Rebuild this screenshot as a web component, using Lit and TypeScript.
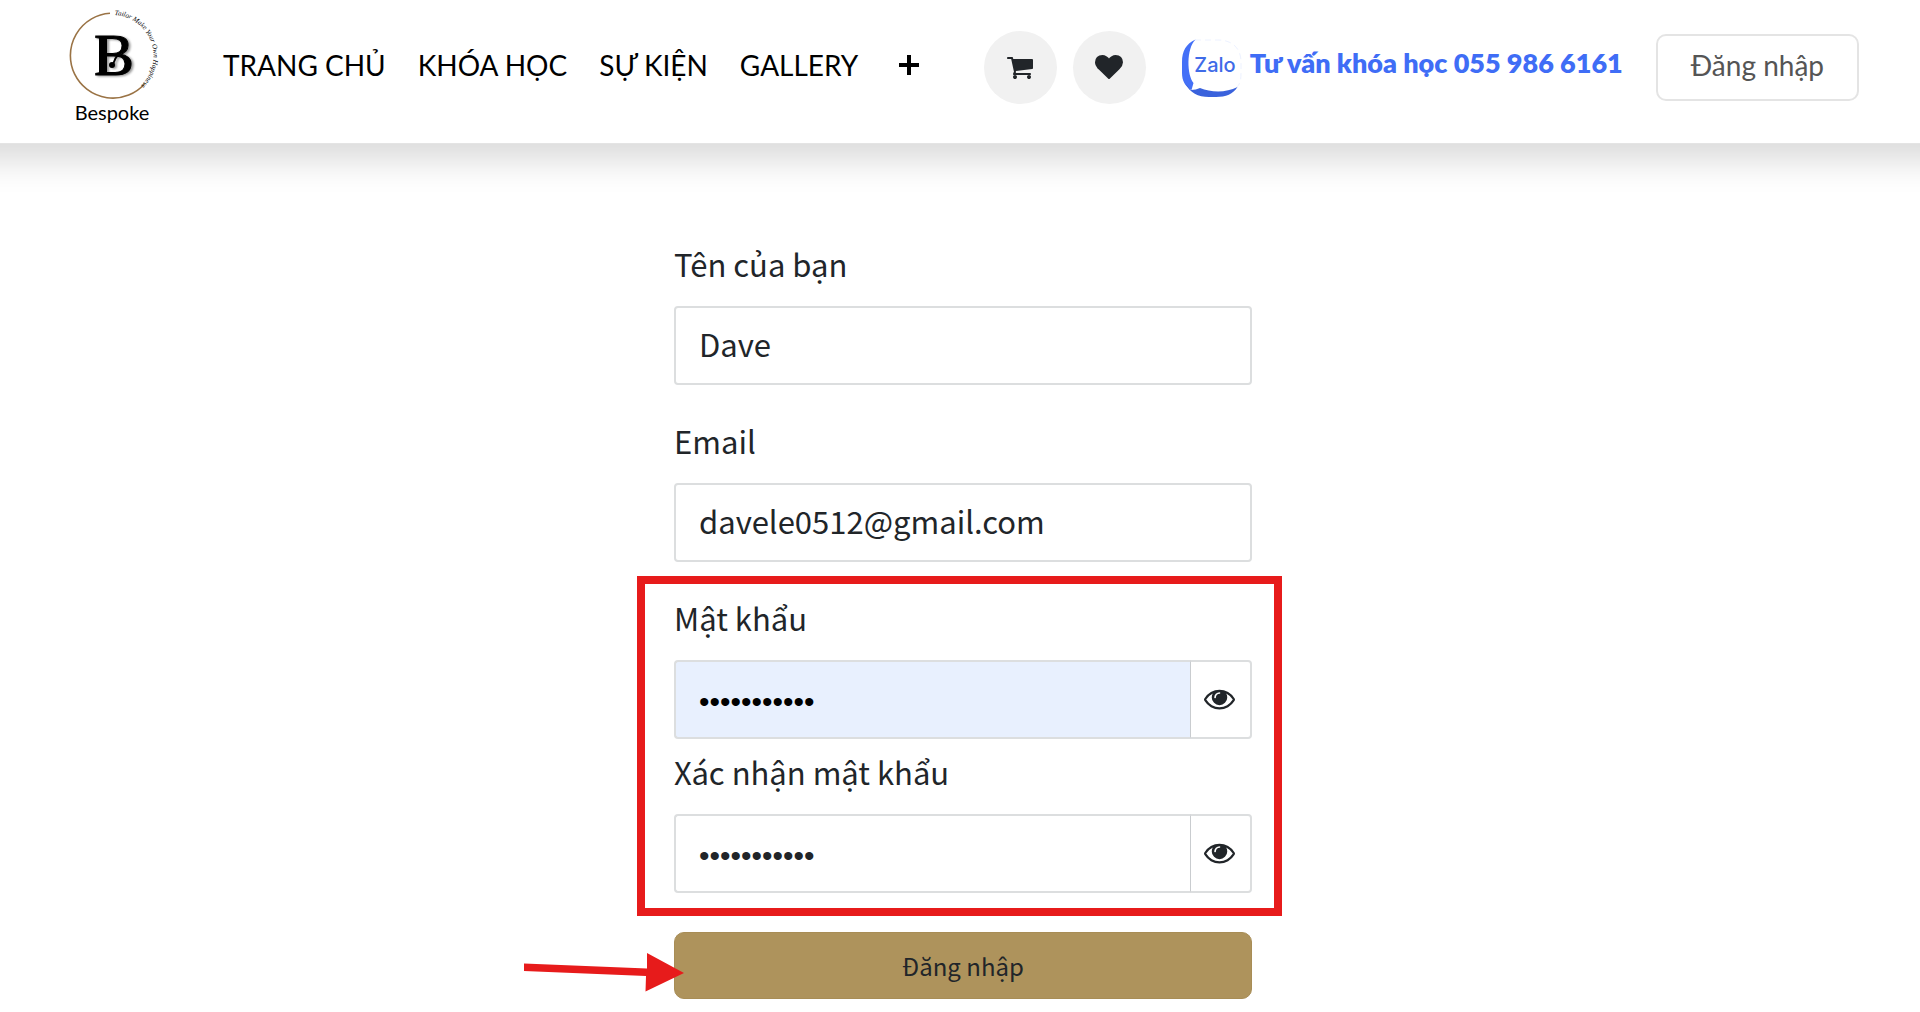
import { LitElement, html, css, svg } from "lit";
import { customElement, state } from "lit/decorators.js";
import { classMap } from "lit/directives/class-map.js";

const CART =
  "M704 1536q0 52-38 90t-90 38-90-38-38-90 38-90 90-38 90 38 38 90zm896 0q0 52-38 90t-90 38-90-38-38-90 38-90 90-38 90 38 38 90zm128-1088v512q0 24-16.500 42.500t-40.500 21.500l-1044 122q13 60 13 70 0 16-24 64h920q26 0 45 19t19 45-19 45-45 19h-1024q-26 0-45-19t-19-45q0-11 8-31.500t16-36 21.500-40 15.500-29.500l-177-823h-204q-26 0-45-19t-19-45 19-45 45-19h256q16 0 28.500 6.500t19.500 15.500 13 24.500 8 26 5.500 29.500 4.500 26h1201q26 0 45 19t19 45z";
const HEART =
  "M896 1664q-26 0-44-18l-624-602q-10-8-27.500-26t-55.500-65.500-68-97.500-53.500-121-23.500-138q0-220 127-344t351-124q62 0 126.500 21.500t120 58 95.500 68.500 76 68q36-36 76-68t95.500-68.500 120-58 126.500-21.500q224 0 351 124t127 344q0 221-229 450l-623 600q-18 18-44 18z";
const EYE =
  "M1664 960q-152-236-381-353 61 104 61 225 0 185-131.500 316.500t-316.500 131.500-316.500-131.500-131.500-316.500q0-121 61-225-229 117-381 353 133 205 333.500 326.500t434.500 121.500 434.500-121.500 333.500-326.500zm-720-384q0-20-14-34t-34-14q-125 0-214.500 89.500t-89.500 214.500q0 20 14 34t34 14 34-14 14-34q0-86 61-147t147-61q20 0 34-14t14-34zm848 384q0 34-20 69-140 230-376.500 368.500t-499.500 138.500-499.500-139-376.500-368q-20-35-20-69t20-69q140-229 376.500-368t499.500-139 499.500 139 376.500 368q20 35 20 69z";

const glyph = (d: string) => html`
  <svg class="glyph" viewBox="0 0 1792 1792" aria-hidden="true">${svg`<path d=${d} />`}</svg>
`;

@customElement("site-header")
export class SiteHeader extends LitElement {
  static styles = css`
    :host {
      display: block;
      overflow-x: clip;
      font-family: "Lato", "Liberation Sans", sans-serif;
    }
    /* The bar runs past both sides so that its shadow stays even at the edges. */
    .bar {
      display: flex;
      align-items: center;
      box-sizing: border-box;
      min-height: 143px;
      margin: 0 -40px;
      padding: 8px 101px 8px 104px;
      background: #fff;
      border-bottom: 1px solid #e4e4e4;
      box-shadow: 0 16px 32px rgba(0, 0, 0, 0.15);
    }
    .brand {
      display: block;
      margin-right: 59px;
    }
    .brand svg {
      display: block;
      width: 100px;
      height: 127px;
    }
    .menu {
      display: flex;
      align-items: center;
      gap: 32px;
      padding-bottom: 14px;
    }
    .menu a {
      color: #000;
      font-size: 28px;
      line-height: 36px;
      text-decoration: none;
      white-space: nowrap;
    }
    .more {
      display: flex;
      margin-left: 8px;
      padding: 0;
      border: 0;
      background: none;
    }
    .more svg {
      width: 22px;
      height: 22px;
    }
    .actions {
      display: flex;
      align-items: center;
      margin-left: auto;
      padding-bottom: 9px;
    }
    .round {
      display: flex;
      align-items: center;
      justify-content: center;
      width: 73px;
      height: 73px;
      margin-right: 16px;
      border-radius: 50%;
      background: #f1f1f1;
      color: #212529;
    }
    .glyph {
      width: 28px;
      height: 28px;
      fill: currentColor;
    }
    .zalo {
      display: flex;
      align-items: center;
      gap: 8px;
      margin: 0 33px 0 20px;
      color: #3f6df6;
      font-size: 27px;
      font-weight: 800;
      line-height: 36px;
      text-decoration: none;
      white-space: nowrap;
    }
    .zalo svg {
      width: 60px;
      height: 60px;
    }
    .zalo span {
      padding-bottom: 8px;
    }
    .login {
      display: block;
      padding: 11px 33px 16px;
      border: 2px solid #e4e4e4;
      border-radius: 10px;
      color: #555;
      font-size: 28px;
      line-height: 36px;
      text-decoration: none;
      white-space: nowrap;
    }
    .word {
      font: 20px "Lato", sans-serif;
    }
    .motto {
      font: italic 7px "Liberation Serif", serif;
    }
    .mono {
      font: 60px "Liberation Serif", serif;
    }
    .zword {
      font: 500 20px "Inter", sans-serif;
    }
  `;

  private links = ["TRANG CHỦ", "KHÓA HỌC", "SỰ KIỆN", "GALLERY"];

  render() {
    return html`
      <header class="bar">
        <a class="brand" href="#" aria-label="Bespoke">
          <svg viewBox="0 0 100 127">
            <defs>
              <path id="ring" d="M48.500 7A41 41 0 0 1 48.500 89" />
              <filter id="soft" x="-20%" y="-20%" width="140%" height="140%">
                <feDropShadow dx="2" dy="1" stdDeviation="1" flood-opacity="0.4" />
              </filter>
            </defs>
            <path d="M46 5.200A42.500 42.500 0 1 0 80.500 76" fill="none" stroke="#9a7345" stroke-width="1.600" />
            <text class="motto"><textPath href="#ring" startOffset="2">Tailor Make Your Own Happiness</textPath></text>
            <g filter="url(#soft)">
              <text class="mono" x="30" y="67" stroke="#000" stroke-width="1">B</text>
              <rect x="35" y="28" width="8" height="38" />
              <path d="M56 47C50 47 51 56 48 57" fill="none" stroke="#000" stroke-width="2" />
              <circle cx="48" cy="57" r="3" />
            </g>
            <text class="word" x="48" y="112" text-anchor="middle">Bespoke</text>
          </svg>
        </a>
        <nav class="menu">
          ${this.links.map((label) => html`<a href="#">${label}</a>`)}
          <button class="more" type="button" aria-label="Thêm">
            <svg viewBox="0 0 22 22"><path d="M11 1V21M1 11H21" stroke="#000" stroke-width="4" /></svg>
          </button>
        </nav>
        <div class="actions">
          <a class="round" href="#" aria-label="Giỏ hàng">${glyph(CART)}</a>
          <a class="round" href="#" aria-label="Yêu thích">${glyph(HEART)}</a>
          <a class="zalo" href="#">
            <svg viewBox="0 0 60 60" aria-hidden="true">
              <path d="M13 3H36C50 3 59 11 59 25V36C59 43 58 47 55 50" fill="none" stroke="#edf2ff" stroke-width="1" stroke-dasharray="6 4" />
              <path d="M13.500 2.500C4 7 0 14 0 25V36C0 44 3 49 9.500 53L11.500 46C5 38 4 12 13.500 2.500Z" fill="#4470f7" />
              <path d="M3 46C8 56 16 60 27 60H34C44 60 51 57 55.500 50C44 56 29 55.500 18 51Q14 53 9 53Z" fill="#3a62dc" />
              <text class="zword" x="33" y="35" text-anchor="middle" fill="#3f6be8">Zalo</text>
            </svg>
            <span>Tư vấn khóa học 055 986 6161</span>
          </a>
          <a class="login" href="#">Đăng nhập</a>
        </div>
      </header>
    `;
  }
}

@customElement("signup-form")
export class SignupForm extends LitElement {
  static styles = css`
    :host {
      display: block;
      color: #212529;
      font-family: "Noto Sans CJK SC", "Noto Sans", sans-serif;
    }
    .form {
      display: flex;
      flex-direction: column;
      max-width: 578px;
      margin: 0 auto;
      padding: 98px 0 12px 6px;
    }
    .field {
      display: flex;
      flex-direction: column;
      gap: 21px;
      margin-bottom: 34px;
    }
    .label {
      font-size: 31px;
      line-height: 43px;
    }
    .input {
      box-sizing: border-box;
      width: 100%;
      min-width: 0;
      height: 79px;
      padding: 0 23px 4px;
      border: 2px solid #dcdedf;
      border-radius: 4px;
      background: #fff;
      color: inherit;
      font: inherit;
      font-size: 31px;
      line-height: 44px;
      outline: none;
    }
    .secret {
      position: relative;
      display: flex;
      flex-direction: column;
      gap: 11px;
      margin-bottom: 39px;
    }
    .secret .field {
      margin-bottom: 0;
    }
    .group {
      display: flex;
    }
    .group .input {
      flex: 1;
      padding: 4px 23px 0;
      border-right-width: 1px;
      border-right-color: #c9cccf;
      border-radius: 4px 0 0 4px;
      font-family: "Liberation Sans", sans-serif;
      font-size: 30px;
    }
    .group .filled {
      background: #e8f0fe;
      color: #000;
    }
    .toggle {
      display: flex;
      align-items: center;
      justify-content: center;
      width: 61px;
      padding: 0 2px 2px 0;
      border: 2px solid #dcdedf;
      border-left: 0;
      border-radius: 0 4px 4px 0;
      background: #fff;
      color: #212529;
    }
    .glyph {
      width: 31px;
      height: 31px;
      fill: currentColor;
    }
    .frame {
      position: absolute;
      inset: -20px -30px -23px -37px;
      border: 8px solid #e71b1b;
      pointer-events: none;
    }
    .submit-row {
      position: relative;
      display: flex;
    }
    .submit {
      flex: 1;
      height: 67px;
      padding: 0 24px;
      border: 1px solid #a88d56;
      border-radius: 10px;
      background: #ae935c;
      color: #212529;
      font: inherit;
      font-size: 24px;
      line-height: 36px;
    }
    .arrow {
      position: absolute;
      left: -152px;
      top: 20px;
      width: 164px;
      height: 40px;
      pointer-events: none;
    }
  `;

  @state() private shown: Record<string, boolean> = {};

  private flip(id: string) {
    this.shown = { ...this.shown, [id]: !this.shown[id] };
  }

  private text(id: string, label: string, type: string, value: string) {
    return html`
      <div class="field">
        <label class="label" for=${id}>${label}</label>
        <input class="input" id=${id} type=${type} .value=${value} />
      </div>
    `;
  }

  private password(id: string, label: string, filled: boolean) {
    return html`
      <div class="field">
        <label class="label" for=${id}>${label}</label>
        <div class="group">
          <input
            class=${classMap({ input: true, filled })}
            id=${id}
            type=${this.shown[id] ? "text" : "password"}
            .value=${"bespoke2024"}
          />
          <button class="toggle" type="button" aria-label="Hiện mật khẩu" @click=${() => this.flip(id)}>
            ${glyph(EYE)}
          </button>
        </div>
      </div>
    `;
  }

  render() {
    return html`
      <form class="form" @submit=${(e: Event) => e.preventDefault()}>
        ${this.text("name", "Tên của bạn", "text", "Dave")}
        ${this.text("email", "Email", "email", "davele0512@gmail.com")}
        <div class="secret">
          ${this.password("password", "Mật khẩu", true)}
          ${this.password("confirm", "Xác nhận mật khẩu", false)}
          <div class="frame"></div>
        </div>
        <div class="submit-row">
          <button class="submit" type="submit">Đăng nhập</button>
          <svg class="arrow" viewBox="0 0 164 40" aria-hidden="true">
            <path d="M2 11.500L125 16.500V1L162 21L123.500 39.500L124 24L2 19Z" fill="#e71b1b" />
          </svg>
        </div>
      </form>
    `;
  }
}

@customElement("app-root")
export class AppRoot extends LitElement {
  static styles = css`
    :host {
      display: block;
      min-height: 100vh;
      background: #fff;
    }
  `;

  render() {
    return html`
      <site-header></site-header>
      <main><signup-form></signup-form></main>
    `;
  }
}
